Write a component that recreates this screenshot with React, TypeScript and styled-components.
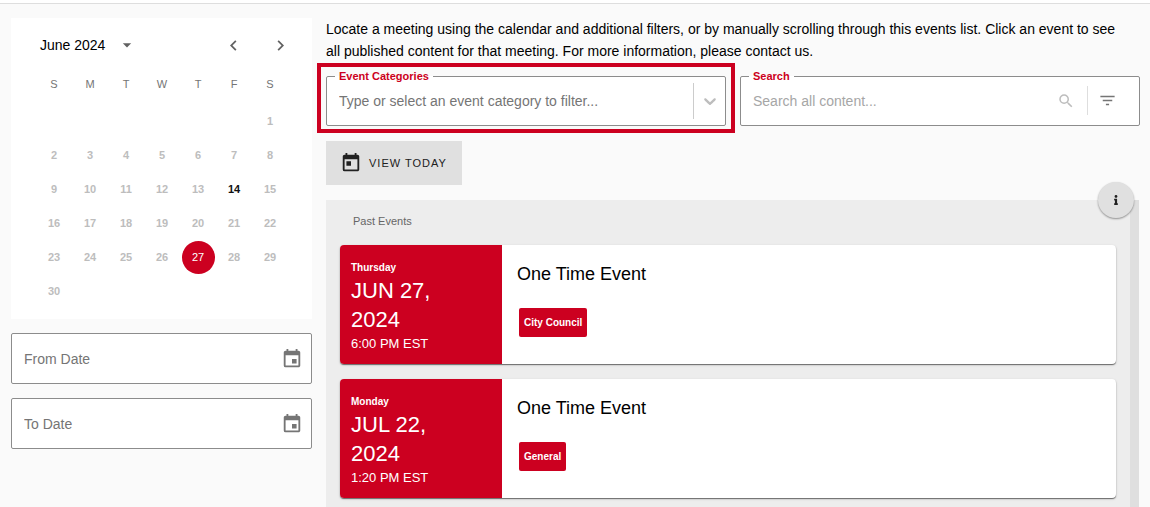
import React, { useState } from "react";
import styled, { createGlobalStyle } from "styled-components";
import {
  MdArrowDropDown,
  MdChevronLeft,
  MdChevronRight,
  MdEvent,
  MdFilterList,
  MdSearch,
  MdToday,
} from "react-icons/md";
import { FaInfo } from "react-icons/fa";

const red = "#cc0020";

const GlobalStyle = createGlobalStyle`
  *, *::before, *::after { box-sizing: border-box; }
  body {
    margin: 0;
    background: #fafafa;
    color: #000;
    font-family: "Liberation Sans", Arial, sans-serif;
    font-size: 14px;
  }
  button, input, select { font: inherit; color: inherit; }
  button { border: 0; padding: 0; background: none; cursor: pointer; }
`;

const Page = styled.div`
  display: flex;
  flex-direction: column;
  height: 100vh;
  overflow: hidden;
`;

const TopBar = styled.header`
  flex: none;
  height: 4px;
  background: #fff;
  border-bottom: 1px solid #dedede;
`;

const Columns = styled.main`
  flex: 1;
  min-height: 0;
  display: grid;
  grid-template-columns: 301px minmax(0, 1fr);
  grid-template-rows: minmax(0, 1fr);
  gap: 14px;
  padding: 14px 10px 0 11px;
`;

const Sidebar = styled.aside`
  display: flex;
  flex-direction: column;
  gap: 14px;
`;

const CalendarPanel = styled.section`
  background: #fff;
  padding: 0 24px 11px 25px;
`;

const CalendarHeader = styled.div`
  display: flex;
  align-items: center;
  height: 54px;
`;

const MonthButton = styled.button`
  display: flex;
  align-items: center;
  gap: 12px;
  margin-left: 4px;
  margin-right: auto;
  svg { color: #616161; }
`;

const ArrowButton = styled.button`
  display: flex;
  align-items: center;
  justify-content: center;
  width: 34px;
  height: 34px;
  margin-left: 13px;
  color: #616161;
  &:last-child { margin-right: -9px; }
`;

const MonthTable = styled.table`
  width: 100%;
  table-layout: fixed;
  border-collapse: collapse;
  font-size: 11px;
  text-align: center;
  th { height: 24px; padding: 0; font-weight: 400; color: #757575; }
  td { height: 34px; padding: 0; }
  tbody::before { content: ""; display: block; height: 8px; }
`;

type DayState = "past" | "active" | "selected";

const DayButton = styled.button<{ $state: DayState }>`
  width: 33px;
  height: 33px;
  border-radius: 50%;
  font-weight: ${(p) => (p.$state === "selected" ? 400 : 700)};
  color: ${(p) => ({ past: "#bdbdbd", active: "#111", selected: "#fff" })[p.$state]};
  background: ${(p) => (p.$state === "selected" ? red : "transparent")};
`;

const DateBox = styled.div`
  display: flex;
  align-items: center;
  height: 51px;
  padding: 0 8px 0 12px;
  background: #fff;
  border: 1px solid #8c8c8c;
  border-radius: 2px;
`;

const TextInput = styled.input<{ $tone: string }>`
  flex: 1;
  min-width: 0;
  height: 32px;
  padding: 0;
  border: 0;
  outline: 0;
  background: transparent;
  &::placeholder { color: ${(p) => p.$tone}; opacity: 1; }
`;

const IconButton = styled.button`
  display: flex;
  color: #757575;
`;

const Content = styled.div`
  display: flex;
  flex-direction: column;
  min-width: 0;
`;

const Intro = styled.p`
  margin: 0;
  padding-right: 12px;
  line-height: 22px;
`;

const Filters = styled.div`
  display: grid;
  grid-template-columns: 1fr 1fr;
  gap: 14px;
  margin-top: 8px;
`;

const FieldFrame = styled.div<{ $highlighted?: boolean }>`
  position: relative;
  min-width: 0;
  ${(p) =>
    p.$highlighted &&
    `&::after {
      content: "";
      position: absolute;
      inset: -7px -9px;
      border: 4px solid ${red};
      pointer-events: none;
    }`}
`;

const Outlined = styled.fieldset`
  min-width: 0;
  margin: 0;
  padding: 0 5px 0 8px;
  border: 1px solid #8c8c8c;
  border-radius: 2px;
  background: #fff;
`;

const Legend = styled.legend`
  padding: 0 4px;
  font-size: 11px;
  line-height: 12px;
  font-weight: 700;
  color: ${red};
`;

const FieldRow = styled.div`
  display: flex;
  align-items: center;
  height: 43px;
  padding: 0 0 6px 4px;
`;

const CategorySelect = styled.select`
  flex: 1;
  min-width: 0;
  height: 32px;
  padding: 0;
  border: 0;
  outline: 0;
  appearance: none;
  background: transparent;
  color: #757575;
`;

const Divider = styled.span<{ $tall?: boolean }>`
  width: 1px;
  height: ${(p) => (p.$tall ? 36 : 29)}px;
  background: ${(p) => (p.$tall ? "#ccc" : "#dedede")};
  margin: 0 ${(p) => (p.$tall ? 6 : 10)}px;
`;

const SearchIcon = styled(MdSearch)`
  margin-right: 2px;
  color: #bdbdbd;
`;

const FilterButton = styled(IconButton)`
  margin-right: 17px;
`;

const TodayButton = styled.button`
  display: flex;
  align-items: center;
  align-self: flex-start;
  gap: 7px;
  flex: none;
  height: 44px;
  margin-top: 15px;
  padding: 0 15px 0 14px;
  background: #e0e0e0;
  color: #212121;
  font-size: 11px;
  letter-spacing: 1px;
`;

const ListArea = styled.section`
  position: relative;
  flex: 1;
  min-height: 0;
  margin-top: 15px;
  display: flex;
`;

const EventList = styled.div`
  flex: 1;
  min-width: 0;
  overflow: hidden;
  display: flex;
  flex-direction: column;
  gap: 15px;
  padding: 0 14px;
  margin-right: 1px;
  background: #ededed;
  border-right: 9px solid #dfdfdf;
`;

const ListHeading = styled.h2`
  flex: none;
  margin: 0;
  padding: 6px 0 0 13px;
  height: 30px;
  line-height: 30px;
  font-size: 11px;
  font-weight: 400;
  color: #666;
`;

const InfoButton = styled.button`
  position: absolute;
  top: -18px;
  right: 6px;
  display: flex;
  align-items: center;
  justify-content: center;
  width: 36px;
  height: 36px;
  border-radius: 50%;
  background: #e0e0e0;
  color: #212121;
  box-shadow: 0 1px 2px rgba(0, 0, 0, 0.4);
`;

const Card = styled.article`
  flex: none;
  display: flex;
  min-height: 118px;
  border-radius: 4px;
  overflow: hidden;
  background: #fff;
  box-shadow: 0 1px 1px rgba(0, 0, 0, 0.5), 0 1px 3px rgba(0, 0, 0, 0.14);
`;

const CardDate = styled.time`
  display: flex;
  flex-direction: column;
  width: 162px;
  padding: 14px 48px 11px 11px;
  background: ${red};
  color: #fff;
`;

const Weekday = styled.span`
  font-size: 10px;
  line-height: 17px;
  font-weight: 700;
`;

const BigDate = styled.span`
  font-size: 22px;
  line-height: 29px;
`;

const Clock = styled.span`
  font-size: 13px;
  line-height: 19px;
`;

const CardBody = styled.div`
  flex: 1;
  display: flex;
  flex-direction: column;
  align-items: flex-start;
  padding: 18px 15px;
  gap: 23px;
`;

const CardTitle = styled.h3`
  margin: 0;
  font-size: 18px;
  line-height: 22px;
  font-weight: 400;
`;

const Tag = styled.span`
  margin-left: 2px;
  padding: 0 5px;
  border-radius: 2px;
  background: ${red};
  color: #fff;
  font-size: 10px;
  line-height: 29px;
  font-weight: 700;
`;

const weeks: (number | null)[][] = [
  [null, null, null, null, null, null, 1],
  [2, 3, 4, 5, 6, 7, 8],
  [9, 10, 11, 12, 13, 14, 15],
  [16, 17, 18, 19, 20, 21, 22],
  [23, 24, 25, 26, 27, 28, 29],
  [30, null, null, null, null, null, null],
];

const events = [
  { weekday: "Thursday", date: "JUN 27, 2024", time: "6:00 PM EST", title: "One Time Event", tag: "City Council" },
  { weekday: "Monday", date: "JUL 22, 2024", time: "1:20 PM EST", title: "One Time Event", tag: "General" },
];

function Calendar() {
  const [selected, setSelected] = useState(27);
  const stateOf = (day: number): DayState =>
    day === selected ? "selected" : day === 14 ? "active" : "past";
  return (
    <CalendarPanel aria-label="Calendar">
      <CalendarHeader>
        <MonthButton>
          June 2024 <MdArrowDropDown size={20} />
        </MonthButton>
        <ArrowButton aria-label="Previous month"><MdChevronLeft size={21} /></ArrowButton>
        <ArrowButton aria-label="Next month"><MdChevronRight size={21} /></ArrowButton>
      </CalendarHeader>
      <MonthTable>
        <thead>
          <tr>
            {["S", "M", "T", "W", "T", "F", "S"].map((d, i) => <th key={i} scope="col">{d}</th>)}
          </tr>
        </thead>
        <tbody>
          {weeks.map((week, w) => (
            <tr key={w}>
              {week.map((day, i) => (
                <td key={i}>
                  {day && <DayButton $state={stateOf(day)} onClick={() => setSelected(day)}>{day}</DayButton>}
                </td>
              ))}
            </tr>
          ))}
        </tbody>
      </MonthTable>
    </CalendarPanel>
  );
}

function DateField({ label }: { label: string }) {
  return (
    <DateBox>
      <TextInput $tone="#757575" aria-label={label} placeholder={label} />
      <IconButton aria-label={`Choose ${label}`}><MdEvent size={22} /></IconButton>
    </DateBox>
  );
}

export default function App() {
  return (
    <Page>
      <GlobalStyle />
      <TopBar />
      <Columns>
        <Sidebar>
          <Calendar />
          <DateField label="From Date" />
          <DateField label="To Date" />
        </Sidebar>
        <Content>
          <Intro>
            Locate a meeting using the calendar and additional filters, or by manually scrolling
            through this events list. Click an event to see all published content for that meeting.
            For more information, please contact us.
          </Intro>
          <Filters>
            <FieldFrame $highlighted>
              <Outlined>
                <Legend><label htmlFor="categories">Event Categories</label></Legend>
                <FieldRow>
                  <CategorySelect id="categories" defaultValue="">
                    <option value="">Type or select an event category to filter...</option>
                    <option>City Council</option>
                    <option>General</option>
                  </CategorySelect>
                  <Divider $tall />
                  <svg width="20" height="20" viewBox="0 0 20 20" fill="#bdbdbd" aria-hidden="true">
                    <path d="M4.516 7.548c0.436-0.446 1.043-0.481 1.576 0l3.908 3.747 3.908-3.747c0.533-0.481 1.141-0.446 1.574 0 0.436 0.445 0.408 1.197 0 1.615-0.406 0.418-4.695 4.502-4.695 4.502-0.217 0.223-0.502 0.335-0.787 0.335s-0.57-0.112-0.789-0.335c0 0-4.287-4.084-4.695-4.502s-0.436-1.17 0-1.615z" />
                  </svg>
                </FieldRow>
              </Outlined>
            </FieldFrame>
            <FieldFrame>
              <Outlined>
                <Legend><label htmlFor="search">Search</label></Legend>
                <FieldRow>
                  <TextInput id="search" $tone="#a6a6a6" placeholder="Search all content..." />
                  <SearchIcon size={18} />
                  <Divider />
                  <FilterButton aria-label="Filters"><MdFilterList size={19} /></FilterButton>
                </FieldRow>
              </Outlined>
            </FieldFrame>
          </Filters>
          <TodayButton><MdToday size={22} />VIEW TODAY</TodayButton>
          <ListArea>
            <EventList>
              <ListHeading>Past Events</ListHeading>
              {events.map((e) => (
                <Card key={e.date}>
                  <CardDate>
                    <Weekday>{e.weekday}</Weekday>
                    <BigDate>{e.date}</BigDate>
                    <Clock>{e.time}</Clock>
                  </CardDate>
                  <CardBody>
                    <CardTitle>{e.title}</CardTitle>
                    <Tag>{e.tag}</Tag>
                  </CardBody>
                </Card>
              ))}
            </EventList>
            <InfoButton aria-label="Information"><FaInfo size={10} /></InfoButton>
          </ListArea>
        </Content>
      </Columns>
    </Page>
  );
}
